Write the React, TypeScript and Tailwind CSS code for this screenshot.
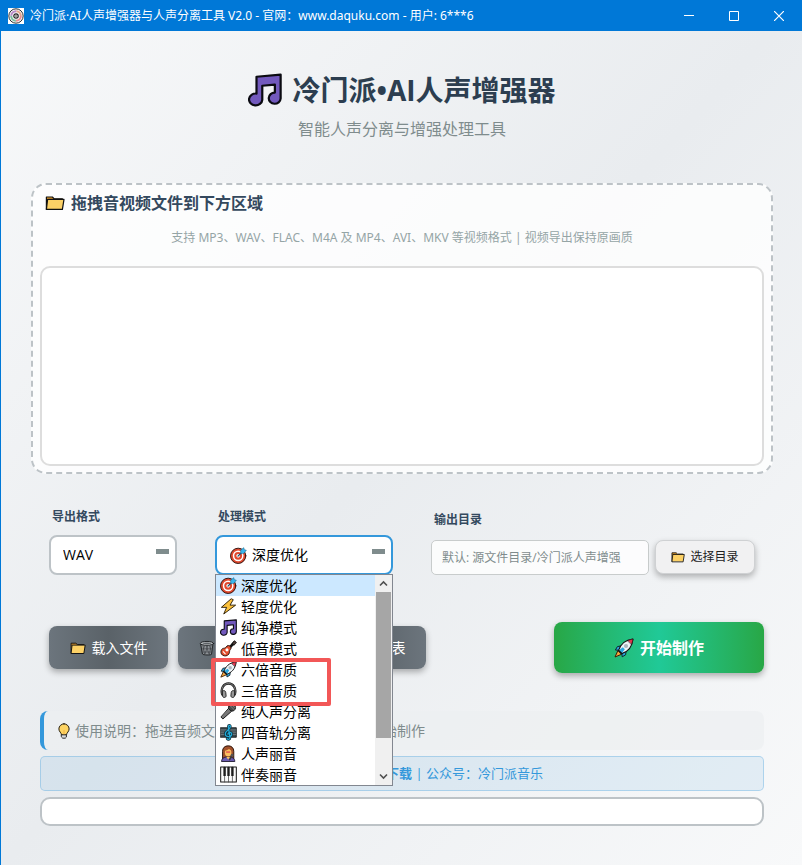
import { useState } from "react";
import type { ReactNode } from "react";

type IconProps = { className?: string };

function Svg({ className = "size-4", children }: IconProps & { children: ReactNode }) {
  return (
    <svg viewBox="0 0 20 20" className={`shrink-0 ${className}`} aria-hidden="true" strokeLinejoin="round" strokeLinecap="round">
      {children}
    </svg>
  );
}

function MusicIcon({ className }: IconProps) {
  return (
    <Svg className={className}>
      <path
        d="M5 2.200 19.200 1v14a3.500 3.300 0 1 1-3.400-3.500V6.800l-7.400.7v8.300a3.900 3.500 0 1 1-3.400-3.700z"
        fill="#7259bd"
        stroke="#0b0b12"
        strokeWidth="1.3"
      />
    </Svg>
  );
}

function FolderIcon({ className }: IconProps) {
  return (
    <Svg className={className}>
      <path d="M1.4 16.2V4h6l1.800 1.800h8.200v3" fill="#e39a2b" stroke="#111" strokeWidth="1.2" />
      <path d="M1.400 16.400 2.600 6.400h16.400l-1.600 10z" fill="#fcd166" stroke="#111" strokeWidth="1.2" />
    </Svg>
  );
}

function TargetIcon({ className }: IconProps) {
  return (
    <Svg className={className}>
      <circle cx="9.600" cy="10.400" r="9" fill="#e0492f" stroke="#2c100c" strokeWidth="1.100" />
      <circle cx="9.600" cy="10.400" r="6.300" fill="#fff" />
      <circle cx="9.600" cy="10.400" r="4.600" fill="#e0492f" />
      <circle cx="9.600" cy="10.400" r="2.100" fill="#fff" />
      <path d="M9.400 10.800 14 6.200" stroke="#174e70" strokeWidth="1.400" />
      <path d="M12.600 7.400V3.600L16.200.8l.6 2.400 2.400.6-2.800 3.600z" fill="#38b5ec" stroke="#17688f" strokeWidth=".7" />
    </Svg>
  );
}

function BoltIcon({ className }: IconProps) {
  return (
    <Svg className={className}>
      <path d="M12.800 1.200 1.600 11h6.200L4.400 18.800 18.400 8.400h-6.600l3.600-6z" fill="#fdc23c" stroke="#2b1d05" strokeWidth="1.100" />
    </Svg>
  );
}

function GuitarIcon({ className }: IconProps) {
  return (
    <Svg className={className}>
      <path d="M10 10.400 16.600 3" stroke="#111" strokeWidth="3.200" />
      <path d="M14.600 3.800 17 .8l2.400 2.200-2.800 3z" fill="#4c3b36" stroke="#111" strokeWidth="1" />
      <path
        d="M8.200 7.200c1.400-1.200 2.800-.8 3.800.4s1.400 2.400.2 3.600c-1 .9-.8 1.600-1 3.200-.4 3-3.400 5-6.400 4.200S.6 15.400 1.200 12.800s2.400-3 4-3.200 2-1.400 3-2.400z"
        fill="#e45030"
        stroke="#26100a"
        strokeWidth="1.100"
      />
      <circle cx="8.200" cy="11.600" r="1.800" fill="#fff" />
      <path d="M3.800 13.800 6.200 16.200" stroke="#fff" strokeWidth="1.300" />
    </Svg>
  );
}

function RocketIcon({ className }: IconProps) {
  return (
    <Svg className={className}>
      <path d="M3.800 12.800 1 19l6.200-2.600z" fill="#f9a63a" stroke="#3a1d06" strokeWidth="1" />
      <path d="M7.600 7.800 3.400 8.600 1.400 12l4 .2zM12.200 12.600l-.6 4.200-3.400 2-.4-4.200z" fill="#2aa7e0" stroke="#10242f" strokeWidth="1" />
      <path d="M4.600 12.400C6.400 6.600 10.600 2 19 1c-.8 8.400-5.400 12.800-11.200 14.600z" fill="#eef3f6" stroke="#111" strokeWidth="1.100" />
      <path d="M13.800 2.600C15.400 1.800 17.200 1.200 19 1c-.2 1.900-.7 3.600-1.500 5.200z" fill="#e0344c" stroke="#111" strokeWidth=".6" />
      <circle cx="12" cy="8" r="2.100" fill="#aab6bd" />
      <path d="M4.600 12.400 7.800 15.600l3-4.400-2-2z" fill="#2aa7e0" />
      <path d="M4.600 12.400l3.200 3.200" stroke="#111" strokeWidth="1.400" />
    </Svg>
  );
}

function HeadphonesIcon({ className }: IconProps) {
  return (
    <Svg className={className}>
      <path d="M2.600 14.500C.4 7 4.600 1.800 10 1.800S19.600 7 17.400 14.500" fill="none" stroke="#222" strokeWidth="2.800" />
      <path d="M2.600 14.500C.4 7 4.600 1.800 10 1.800S19.600 7 17.400 14.500" fill="none" stroke="#8b8b8b" strokeWidth="1" />
      <path d="M3 10.400c2-.8 3.600 0 3.800 2l.4 4c0 1.800-3.400 2.800-4 .8zM17 10.400c-2-.8-3.600 0-3.800 2l-.4 4c0 1.800 3.400 2.800 4 .8z" fill="#999" stroke="#222" strokeWidth="1.100" />
    </Svg>
  );
}

function MicIcon({ className }: IconProps) {
  return (
    <Svg className={className}>
      <path d="M10.400 6.600 13.600 9.800 3.400 18.800 1.400 16.800z" fill="#777" stroke="#111" strokeWidth="1.100" />
      <path d="M10.600 3.800c1.400-2.400 4-3 6-1.600 2.200 1.600 2.200 4.600.4 6.200-1.400 1.200-3 1.400-4 .8l-3-3c-.2-.8.1-1.600.6-2.400z" fill="#4b4b4b" stroke="#111" strokeWidth="1.100" />
      <path d="M12.400 3.600l4.200 4.200M14.800 2.800l2.600 2.600" stroke="#999" strokeWidth=".8" />
    </Svg>
  );
}

function ScoreIcon({ className }: IconProps) {
  return (
    <Svg className={className}>
      <path d="M.8 4.400h18.400v11.200H.8z" fill="#3b464c" stroke="#15191b" />
      <path d="M1.400 7h17.200M1.400 9.600h17.200M1.400 12.200h17.200" stroke="#98a3a8" strokeWidth=".7" />
      <path
        d="M8.400 17.200c1.200 1.600 3.600.8 3.400-1.400L9.800 3.600C9.600 1.200 12.200.8 12.200 3c0 3.600-6 4.800-6 8.800 0 4 7.600 4 7.600.4 0-3-4.600-3-4.400-.2"
        fill="none"
        stroke="#0b2b38"
        strokeWidth="3"
      />
      <path
        d="M8.400 17.200c1.200 1.600 3.600.8 3.400-1.400L9.800 3.600C9.600 1.200 12.200.8 12.200 3c0 3.600-6 4.800-6 8.800 0 4 7.600 4 7.600.4 0-3-4.600-3-4.400-.2"
        fill="none"
        stroke="#22a8d4"
        strokeWidth="1.500"
      />
    </Svg>
  );
}

function SingerIcon({ className }: IconProps) {
  return (
    <Svg className={className}>
      <path d="M3 16.500V7.400C3 3.400 5.600 1 9.600 1s6.600 2.400 6.600 6.400v9.100z" fill="#a3522c" stroke="#24110a" strokeWidth="1.100" />
      <path d="M1.800 19c.2-3.600 3.200-5 7.800-5s7.600 1.400 7.800 5z" fill="#6a5bb0" stroke="#1d1830" strokeWidth="1.100" />
      <ellipse cx="9.600" cy="9" rx="3.800" ry="4.400" fill="#fbc15f" />
      <path d="M6 6.400C8 6.600 10 5.600 11 4.200c.6 1 1.400 1.800 2.600 2.200C13 3.600 6.600 3 6 6.400z" fill="#a3522c" />
      <path d="M7.200 7.600h4.800v1.400H7.200z" fill="#e23b52" />
      <path d="M11.400 17.200l2.600-4.600" stroke="#3b3b3b" strokeWidth="1.800" />
      <circle cx="14.200" cy="12" r="1.600" fill="#555" />
      <path d="M7.400 14l2.200 3 2.200-3z" fill="#fbc15f" />
    </Svg>
  );
}

function PianoIcon({ className }: IconProps) {
  return (
    <Svg className={className}>
      <path d="M.8 1.200h18.400v17.600H.8z" fill="#fafafa" stroke="#181818" strokeWidth="1.200" />
      <path d="M5.400 1.200v17.600M10 1.200v17.600M14.600 1.200v17.600" stroke="#444" strokeWidth=".9" />
      <path d="M4 1.200h2.800v10.600H4zM8.600 1.200h2.800v10.600H8.600zM13.200 1.200H16v10.600h-2.800z" fill="#1c1c1c" />
    </Svg>
  );
}

function TrashIcon({ className }: IconProps) {
  return (
    <Svg className={className}>
      <path d="M2.600 5.400h14.800L15.600 18c-.2 1-11 1-11.200 0z" fill="#8d9296" stroke="#17191b" strokeWidth="1.100" />
      <path d="M5 7l2 11M9 7l3.600 11M13 7l2 6M15 7l-2 11M11 7 7.400 18M7 7l-2 6M3.600 11h12.800M4.200 15h11.600" stroke="#3a3e42" strokeWidth=".8" />
      <ellipse cx="10" cy="4.200" rx="8.400" ry="2.400" fill="#c3c7ca" stroke="#17191b" strokeWidth="1.100" />
      <ellipse cx="10" cy="4.200" rx="5.600" ry="1" fill="#5d6266" />
    </Svg>
  );
}

function ListIcon({ className }: IconProps) {
  return (
    <Svg className={className}>
      <path d="M3.500 2.500h13v16h-13z" fill="#f3f3f3" stroke="#111" strokeWidth="1.200" />
      <path d="M6.500 7.500h7M6.500 11h7M6.500 14.500h7" stroke="#666" />
    </Svg>
  );
}

function BulbIcon({ className }: IconProps) {
  return (
    <Svg className={className}>
      <path d="M10 1a6.400 6.400 0 0 0-6.400 6.400c0 3.400 3.200 4.800 3.200 7.400h6.400c0-2.600 3.200-4 3.200-7.400A6.400 6.400 0 0 0 10 1z" fill="#fdd463" stroke="#1b1508" strokeWidth="1.200" />
      <path d="M7 14.800h6v2.800L11.600 19H8.400L7 17.600z" fill="#d7dbde" stroke="#1b1b1b" strokeWidth="1.100" />
      <path d="M10 14V9.500" stroke="#efa93c" />
    </Svg>
  );
}

function GlobeIcon({ className }: IconProps) {
  return (
    <Svg className={className}>
      <circle cx="10" cy="10" r="8.500" fill="#4db4ea" stroke="#11394f" />
      <path d="M1.500 10h17M10 1.500c-5 5-5 12 0 17M10 1.500c5 5 5 12 0 17" fill="none" stroke="#11394f" />
    </Svg>
  );
}

function AppIcon() {
  return (
    <svg viewBox="0 0 16 16" className="size-4 shrink-0" aria-hidden="true">
      <path fill="#fff" d="M0 0h16v16H0z" />
      <circle cx="8" cy="8" r="7.200" fill="#f4f4f6" stroke="#333" strokeWidth="1" />
      <circle cx="8" cy="8" r="4.800" fill="none" stroke="#e98b93" strokeWidth="2" strokeDasharray="7.500 22.600" />
      <circle cx="8" cy="8" r="4.800" fill="none" stroke="#7bbf9c" strokeWidth="2" strokeDasharray="7.500 22.600" strokeDashoffset="-7.500" />
      <circle cx="8" cy="8" r="4.800" fill="none" stroke="#b88ac9" strokeWidth="2" strokeDasharray="7.500 22.600" strokeDashoffset="-15" />
      <circle cx="8" cy="8" r="4.800" fill="none" stroke="#e6a58b" strokeWidth="2" strokeDasharray="7.500 22.600" strokeDashoffset="-22.500" />
      <circle cx="8" cy="8" r="2.200" fill="#fff" stroke="#222" strokeWidth="1.200" />
      <circle cx="8" cy="8" r=".8" fill="#222" />
    </svg>
  );
}

const modes = [
  { name: "深度优化", Icon: TargetIcon },
  { name: "轻度优化", Icon: BoltIcon },
  { name: "纯净模式", Icon: MusicIcon },
  { name: "低音模式", Icon: GuitarIcon },
  { name: "六倍音质", Icon: RocketIcon },
  { name: "三倍音质", Icon: HeadphonesIcon },
  { name: "纯人声分离", Icon: MicIcon },
  { name: "四音轨分离", Icon: ScoreIcon },
  { name: "人声丽音", Icon: SingerIcon },
  { name: "伴奏丽音", Icon: PianoIcon },
];

function TitleBar() {
  return (
    <header className="flex h-[31px] items-center bg-[#0078d7] text-white">
      <div className="flex min-w-0 flex-1 items-center gap-[6px] pl-2">
        <AppIcon />
        <span className="truncate font-['Noto_Sans','Noto_Sans_CJK_SC',sans-serif] text-xs">
          冷门派·AI人声增强器与人声分离工具 V2.0 - 官网：www.daquku.com - 用户: 6***6
        </span>
      </div>
      <div className="flex h-full pr-px">
        <button aria-label="最小化" className="flex w-[45px] items-center justify-center">
          <svg viewBox="0 0 10 10" className="size-[10px]" stroke="#fff"><path d="M0 4.500h10" /></svg>
        </button>
        <button aria-label="最大化" className="flex w-[45px] items-center justify-center">
          <svg viewBox="0 0 10 10" className="size-[10px]" stroke="#fff" fill="none"><path d="M.5.5h9v9h-9z" /></svg>
        </button>
        <button aria-label="关闭" className="flex w-[45px] items-center justify-center">
          <svg viewBox="0 0 10 10" className="size-[10px]" stroke="#fff" strokeWidth="1.200"><path d="M0 0l10 10M10 0 0 10" /></svg>
        </button>
      </div>
    </header>
  );
}

function DropPanel() {
  return (
    <section className="mt-[42px] rounded-[15px] border-2 border-dashed border-[#bdc3c7] bg-white/80 px-[7px] py-[6px]">
      <h2 className="flex items-center gap-[6px] pl-[5px] text-base leading-6 font-bold text-[#34495e]">
        <FolderIcon className="size-5" />
        拖拽音视频文件到下方区域
      </h2>
      <p className="mt-[13px] text-center font-['Noto_Sans','Noto_Sans_CJK_SC',sans-serif] text-xs leading-5 text-[#95a5a6]">
        支持 MP3、WAV、FLAC、M4A 及 MP4、AVI、MKV 等视频格式 | 视频导出保持原画质
      </p>
      <div className="mt-[18px] h-[200px] rounded-[10px] border-2 border-[#dddddd] bg-white" />
    </section>
  );
}

function ModeList({ current, onPick }: { current: string; onPick: (name: string) => void }) {
  return (
    <div className="absolute top-[39px] left-0 z-10 flex h-[212px] w-full border border-[#828790] bg-white">
      <ul role="listbox" aria-label="处理模式" className="min-w-0 flex-1">
        {modes.map(({ name, Icon }) => (
          <li
            key={name}
            role="option"
            aria-selected={name === current}
            onClick={() => onPick(name)}
            className={`flex h-[21px] items-center gap-1 pl-1 text-sm leading-5 text-black ${name === current ? "bg-[#cce8ff]" : ""}`}
          >
            <Icon className="size-[17px]" />
            {name}
          </li>
        ))}
      </ul>
      <div className="flex w-[17px] flex-col items-center bg-[#f0f0f0]">
        <svg viewBox="0 0 17 17" className="size-[17px]" fill="none" stroke="#505050" strokeWidth="1.600"><path d="M5 10.500 8.500 7l3.500 3.500" /></svg>
        <div className="h-[146px] w-[15px] bg-[#a6a6a6]" />
        <svg viewBox="0 0 17 17" className="mt-auto size-[17px]" fill="none" stroke="#505050" strokeWidth="1.600"><path d="M5 6.500 8.500 10 12 6.500" /></svg>
      </div>
      <div className="pointer-events-none absolute top-[83px] -left-[5px] h-12 w-[120px] rounded-xs border-4 border-[#f25757]" />
    </div>
  );
}

function SelectMark() {
  return <span className="pointer-events-none absolute top-[14px] right-2 h-[5px] w-[13px] bg-[#7f8c8d]" />;
}

function Settings() {
  const [mode, setMode] = useState("深度优化");
  const Current = modes.find((m) => m.name === mode)!.Icon;
  return (
    <section className="mt-[35px] flex items-end gap-[38px] pr-[9px]">
      <div>
        <label htmlFor="format" className="block pl-[3px] text-xs leading-4 font-bold text-[#34495e]">导出格式</label>
        <div className="relative mt-[10px]">
          <select id="format" className="h-10 w-32 appearance-none rounded-lg border-2 border-[#bdc3c7] bg-white pl-3 text-sm text-black">
            <option>WAV</option>
            <option>MP3</option>
            <option>FLAC</option>
          </select>
          <SelectMark />
        </div>
      </div>
      <div>
        <label htmlFor="mode" className="block pl-[3px] text-xs leading-4 font-bold text-[#34495e]">处理模式</label>
        <div className="relative mt-[10px]">
          <select
            id="mode"
            value={mode}
            onChange={(e) => setMode(e.target.value)}
            className="h-10 w-[178px] appearance-none rounded-lg border-2 border-[#3498db] bg-white pl-[35px] text-sm text-black"
          >
            {modes.map((m) => (
              <option key={m.name}>{m.name}</option>
            ))}
          </select>
          <Current className="pointer-events-none absolute top-3 left-[15px] size-[17px]" />
          <SelectMark />
          <ModeList current={mode} onPick={setMode} />
        </div>
      </div>
      <div className="min-w-0 flex-1">
        <label htmlFor="output" className="block pl-[3px] text-xs leading-4 font-bold text-[#34495e]">输出目录</label>
        <div className="mt-3 flex gap-[6px]">
          <input
            id="output"
            placeholder="默认: 源文件目录/冷门派人声增强"
            className="h-[35px] min-w-0 flex-1 rounded-[5px] border border-[#c8cccc] bg-white/80 px-[10px] text-xs placeholder:text-[#7f8c8d]"
          />
          <button className="flex h-[34px] w-[100px] items-center justify-center gap-[5px] rounded-lg border border-[#cfd1d3] bg-[#f1f1f2] text-xs text-[#222] shadow-[0_3px_6px_rgba(0,0,0,0.28)]">
            <FolderIcon className="size-[14px]" />
            选择目录
          </button>
        </div>
      </div>
    </section>
  );
}

function GreyButton({ icon, children }: { icon: ReactNode; children: ReactNode }) {
  return (
    <button className="flex h-[43px] w-[119px] items-center justify-center gap-[6px] rounded-lg bg-linear-to-r from-[#6c757d] via-[#5a6268] to-[#6c757d] text-sm text-white shadow-[0_3px_6px_rgba(0,0,0,0.3)]">
      {icon}
      {children}
    </button>
  );
}

export default function App() {
  return (
    <div className="flex min-h-screen flex-col border-l border-[#0078d7] bg-linear-to-br from-[#f8f9fa] via-[#e9ecef] to-[#f8f9fa] font-['Open_Sans','Noto_Sans_CJK_SC',sans-serif]">
      <div className="-ml-px">
        <TitleBar />
      </div>
      <main className="pt-[39px] pr-[29px] pb-10 pl-[30px]">
        <h1 className="flex items-center justify-center gap-[10px] text-[28px] leading-10 font-bold text-[#2c3e50]">
          <MusicIcon className="size-[34px]" />
          冷门派•AI人声增强器
        </h1>
        <p className="mt-[7px] text-center text-base leading-6 text-[#7f8c8d]">智能人声分离与增强处理工具</p>
        <DropPanel />
        <div className="px-[9px]">
          <div className="pl-[9px]">
            <Settings />
            <section className="mt-[47px] flex items-center gap-[10px]">
              <GreyButton icon={<FolderIcon className="size-4" />}>载入文件</GreyButton>
              <GreyButton icon={<TrashIcon className="size-4" />}>清空列表</GreyButton>
              <GreyButton icon={<ListIcon className="size-4" />}>文件列表</GreyButton>
              <button className="ml-auto flex h-[51px] w-[210px] items-center justify-center gap-[6px] rounded-lg bg-linear-to-r from-[#28a745] via-[#20c997] to-[#28a745] text-base font-bold text-white shadow-[0_3px_6px_rgba(0,0,0,0.3)]">
                <RocketIcon className="size-5" />
                开始制作
              </button>
            </section>
          </div>
          <p className="mt-[38px] flex h-[39px] items-center gap-[3px] rounded-lg border-l-4 border-[#3498db] bg-[#ecf0f1]/70 pl-3 text-sm text-[#7f8c8d]">
            <BulbIcon className="size-4" />
            使用说明：拖进音频文件到上面区域，选择模式开始制作
          </p>
          <p className="mt-[6px] flex h-[35px] items-center justify-center gap-1 rounded-[5px] border border-[#3498db]/30 bg-[#3498db]/10 text-[13px] text-[#3498db]">
            <GlobeIcon className="size-[17px]" />
            <span>
              <a href="#download" className="font-bold">更多工具请到官网下载</a> | 公众号：冷门派音乐
            </span>
          </p>
          <div role="progressbar" aria-label="处理进度" aria-valuenow={0} className="mt-[6px] h-[29px] rounded-[10px] border-2 border-[#bdc3c7] bg-white" />
        </div>
      </main>
    </div>
  );
}
